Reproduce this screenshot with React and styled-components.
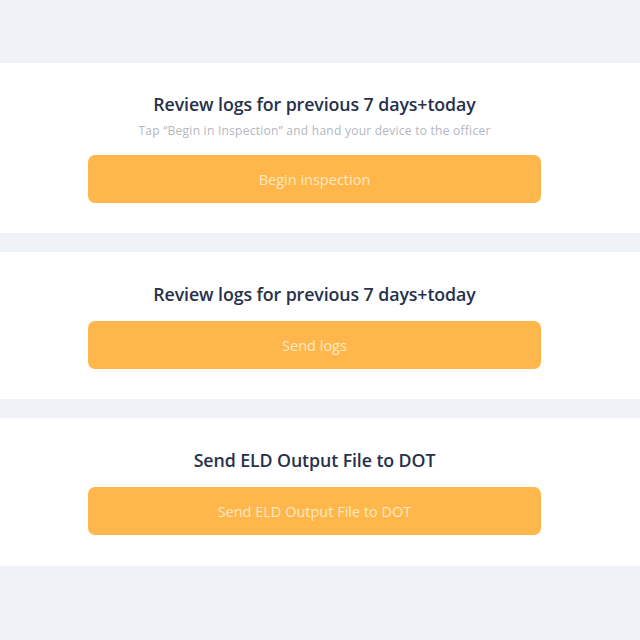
import React from "react";
import styled, { createGlobalStyle } from "styled-components";

const Global = createGlobalStyle`
  html, body { margin: 0; padding: 0; background: #eff2f7; }
  body { font-family: "Open Sans", "Noto Sans", sans-serif; }
`;

const Page = styled.div`
  width: 640px;
  height: 640px;
  background: #eff2f7;
  display: flex;
  flex-direction: column;
  gap: 19px;
  padding-top: 63px;
  box-sizing: border-box;
`;

const Card = styled.section`
  background: #ffffff;
  padding: ${(p) => p.$pt}px 99px ${(p) => p.$pb}px 88px;
  display: flex;
  flex-direction: column;
  align-items: stretch;
`;

const Title = styled.h2`
  margin: 0;
  text-align: center;
  font-size: 17.8px;
  line-height: 20px;
  font-weight: 600;
  letter-spacing: -0.1px;
  color: #27314a;
`;

const Sub = styled.p`
  margin: 10px 0 0;
  text-align: center;
  font-size: 12px;
  line-height: 14px;
  letter-spacing: 0.25px;
  color: #b3b7be;
`;

const Button = styled.button`
  margin-top: 17px;
  height: 48px;
  border: none;
  border-radius: 7px;
  background: #ffb74c;
  color: #fde8c2;
  font-family: inherit;
  font-size: 14.5px;
  cursor: pointer;
`;

export default function App() {
  return (
    <>
      <Global />
      <Page>
        <Card $pt={31} $pb={30}>
          <Title>Review logs for previous 7 days+today</Title>
          <Sub>Tap “Begin in Inspection” and hand your device to the officer</Sub>
          <Button>Begin inspection</Button>
        </Card>
        <Card $pt={32} $pb={30}>
          <Title>Review logs for previous 7 days+today</Title>
          <Button>Send logs</Button>
        </Card>
        <Card $pt={32} $pb={31}>
          <Title>Send ELD Output File to DOT</Title>
          <Button>Send ELD Output File to DOT</Button>
        </Card>
      </Page>
    </>
  );
}
